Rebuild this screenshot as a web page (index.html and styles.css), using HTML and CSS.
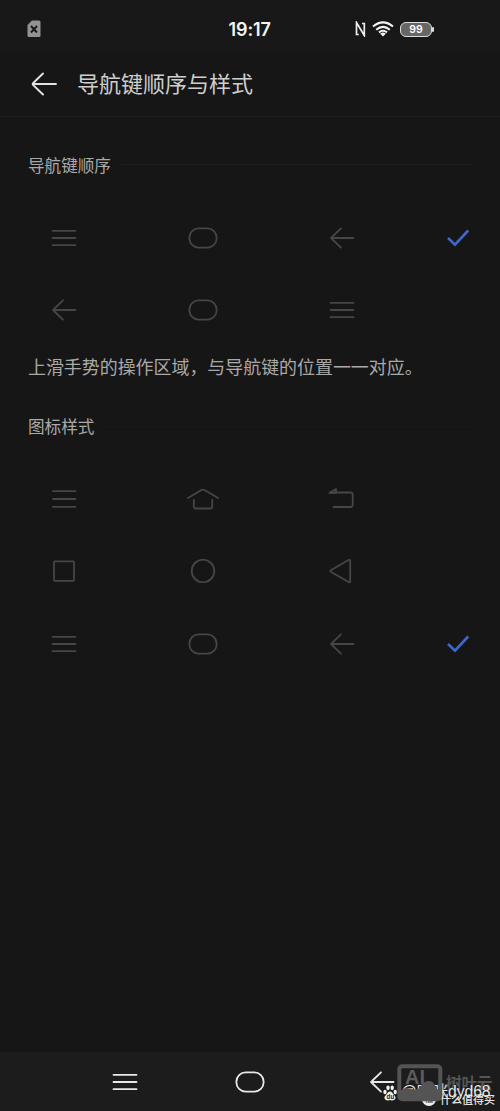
FILE: index.html
```html
<!DOCTYPE html>
<html lang="zh-CN">
<head>
<meta charset="utf-8">
<title>导航键顺序与样式</title>
<link rel="stylesheet" href="styles.css">
</head>
<body>
<svg class="defs" width="0" height="0">
  <symbol id="menu" viewBox="0 0 32 24"><path d="M4.500 4.800h23M4.500 12h23M4.500 19.200h23"/></symbol>
  <symbol id="menu-wide" viewBox="0 0 32 24"><path d="M5 4.200h22.500M5 12h22.500M5 19.900h22.500"/></symbol>
  <symbol id="pill" viewBox="0 0 32 24"><rect x="2.400" y="2.400" width="27.200" height="19.200" rx="9.200"/></symbol>
  <symbol id="back" viewBox="0 0 32 24"><path d="M27.500 12H5M15 2.300L6 11q-1 1 0 2l9 8.700"/></symbol>
  <symbol id="home" viewBox="0 0 32 24"><path d="M1 11L14.500 3q1.500-.8 3 0L31 11M6.800 13v6.500q0 2 2 2h14.400q2 0 2-2V13"/></symbol>
  <symbol id="return" viewBox="0 0 32 24"><path d="M5 5.500h19.500q2.200 0 2.200 2.200v10.100q0 2.200-2.200 2.200H7.500"/><path class="solid" d="M3.500 5.800L10 2v3.800z"/></symbol>
  <symbol id="square" viewBox="0 0 32 24"><rect x="6" y="2.300" width="20" height="19.500" rx="1"/></symbol>
  <symbol id="circle" viewBox="0 0 32 24"><circle cx="16" cy="12" r="11.300"/></symbol>
  <symbol id="triangle" viewBox="0 0 32 24"><path d="M4.800 11.300L22.500 1q1.700-.8 1.700 1v20q0 1.800-1.700 1L4.800 12.700q-1-.7 0-1.400z"/></symbol>
  <symbol id="check" viewBox="0 0 32 24"><path d="M6 12.100l7 6.600L26.200 4.500"/></symbol>
</svg>
<div class="screen">
  <div class="status">
    <svg class="sim" viewBox="0 0 14 18"><path fill="#929292" d="M5 .5h7q1.500 0 1.500 1.500v13.500q0 1.500-1.500 1.500H2q-1.500 0-1.500-1.500V5z"/><path stroke="#181818" stroke-width="1.900" d="M4 6l6 6.500M10 6l-6 6.500"/></svg>
    <span class="time">19:17</span>
    <div class="signals">
      <svg class="nfc" viewBox="0 0 12 16"><path fill="none" stroke="#eee" stroke-width="1.700" d="M4.800 13.500H2.500V1.500L10.300 14.500V2.500H8"/></svg>
      <svg class="wifi" viewBox="0 0 22 16"><g fill="none" stroke="#f4f4f4" stroke-width="2"><path d="M1 5.500Q11-2.800 21 5.500M4.200 8.700Q11 3 17.800 8.700M7 11.400Q11 8.200 15 11.400"/></g><path fill="#f4f4f4" d="M8.200 12.700Q11 10.400 13.800 12.700L11 15.500z"/></svg>
      <div class="battery">99</div>
    </div>
  </div>
  <header class="header">
    <svg class="header-back" viewBox="0 0 28 24"><path d="M26 12H3M13 1.500L3 11.200q-.8.800 0 1.600L13 22.500"/></svg>
    <h1 class="title">导航键顺序与样式</h1>
  </header>
  <main class="content">
    <h2 class="section">导航键顺序</h2>
    <div class="row"><svg class="icon"><use href="#menu"/></svg><svg class="icon"><use href="#pill"/></svg><svg class="icon"><use href="#back"/></svg><svg class="icon check"><use href="#check"/></svg></div>
    <div class="row"><svg class="icon"><use href="#back"/></svg><svg class="icon"><use href="#pill"/></svg><svg class="icon"><use href="#menu"/></svg></div>
    <p class="note">上滑手势的操作区域，与导航键的位置一一对应。</p>
    <h2 class="section faint">图标样式</h2>
    <div class="row"><svg class="icon"><use href="#menu-wide"/></svg><svg class="icon"><use href="#home"/></svg><svg class="icon"><use href="#return"/></svg></div>
    <div class="row"><svg class="icon"><use href="#square"/></svg><svg class="icon"><use href="#circle"/></svg><svg class="icon"><use href="#triangle"/></svg></div>
    <div class="row"><svg class="icon"><use href="#menu"/></svg><svg class="icon"><use href="#pill"/></svg><svg class="icon"><use href="#back"/></svg><svg class="icon check"><use href="#check"/></svg></div>
  </main>
  <nav class="nav">
    <svg class="icon"><use href="#menu"/></svg>
    <svg class="icon"><use href="#pill"/></svg>
    <svg class="icon"><use href="#back"/></svg>
  </nav>
  <div class="marks">
    <svg class="paw" viewBox="0 0 14 16"><g fill="#f2f2f2"><ellipse cx="2" cy="7" rx="1.700" ry="2.300"/><ellipse cx="5" cy="2.800" rx="1.700" ry="2.400"/><ellipse cx="9.200" cy="2.800" rx="1.700" ry="2.400"/><ellipse cx="12.200" cy="7" rx="1.600" ry="2.300"/><path d="M7 6.500c2 0 2.500 2 4 3.400 4 3.600-.5 6.600-4 5.100-3.500 1.500-8-1.500-4-5.100C4.500 8.500 5 6.500 7 6.500z"/></g><text class="paw-text" x="3.600" y="13.800">du</text></svg>
    <span class="badge">值</span>
    <span class="site">什么值得买</span>
    <span class="leaf">树叶云</span>
    <span class="user">@哆咪dyd68</span>
    <svg class="picture" viewBox="0 0 46 38"><rect x="2.300" y="2.300" width="41" height="33" rx="3" fill="none" stroke="#545454" stroke-width="4"/><path fill="#545454" d="M3 36V28q4-6 11-3 4 2 9-1c2-4 4-7 9-7 5 0 6 5 7 7l5 4v8z"/></svg>
    <span class="ai">AI</span>
  </div>
</div>
</body>
</html>
```
FILE: styles.css
```css
body {
  margin: 0;
  background: #171717;
  font-family: "Noto Sans CJK SC", sans-serif;
}
.defs { position: absolute; }
.screen {
  position: relative;
  display: flex;
  flex-direction: column;
  width: 500px;
  height: 1111px;
  overflow: hidden;
  background: #161616;
}
.status {
  display: grid;
  grid-template-columns: 1fr 44px 1fr;
  align-items: center;
  height: 52px;
  padding: 6px 68px 0 27px;
  box-sizing: border-box;
  background: #181818;
}
.sim { width: 14px; height: 18px; }
.time {
  margin-left: 21px;
  padding-top: 2px;
  color: #f4f4f4;
  font: 600 18px/20px Inter, sans-serif;
  white-space: nowrap;
  letter-spacing: -.1px;
}
.signals { display: flex; justify-content: flex-end; align-items: center; }
.nfc { width: 12px; height: 16px; margin-right: 6px; }
.wifi { width: 22px; height: 16px; margin-right: 6px; }
.battery {
  position: relative;
  box-sizing: border-box;
  width: 32px;
  height: 15px;
  border: 1.500px solid #ddd;
  border-radius: 6px;
  background: #666;
  color: #fff;
  font: 600 10.500px/13.500px Inter, sans-serif;
  text-align: center;
}
.battery::after {
  content: "";
  position: absolute;
  right: -3px;
  top: 4px;
  width: 2px;
  height: 5px;
  border-radius: 1px;
  background: #ddd;
}
.header {
  display: flex;
  align-items: center;
  height: 65px;
  padding-left: 30px;
  box-sizing: border-box;
  border-bottom: 1px solid #202020;
}
.header-back {
  width: 28px;
  height: 24px;
  margin-right: 19px;
  fill: none;
  stroke: #e2e2e2;
  stroke-width: 1.900;
  stroke-linecap: round;
}
.title {
  margin: 0;
  padding-bottom: 4px;
  color: #cecece;
  font-size: 22px;
  line-height: 32px;
  font-weight: 400;
}
.content { flex: 1; padding: 35.500px 28px 0; }
.section {
  display: flex;
  align-items: center;
  gap: 10px;
  height: 24px;
  margin: 0 0 25px;
  color: #a9a9a9;
  font-size: 16.600px;
  line-height: 24px;
  font-weight: 400;
}
.section::after { content: ""; flex: 1; height: 1px; background: #1e1e1e; }
.section.faint::after { background: #191919; }
.row {
  display: grid;
  grid-template-columns: repeat(3, 72px) 26px;
  column-gap: 67px;
  align-items: center;
  justify-items: center;
  height: 72.200px;
  margin-right: -28px;
}
.icon {
  width: 32px;
  height: 24px;
  overflow: visible;
  fill: none;
  stroke: #464646;
  stroke-width: 1.800;
  stroke-linecap: round;
  stroke-linejoin: round;
}
.icon .solid { fill: #464646; stroke: none; }
.check {
  stroke: #3c66d2;
  stroke-width: 2.700;
  stroke-linecap: butt;
  stroke-linejoin: miter;
}
.note {
  margin: 7px 0 34.300px;
  color: #a9a9a9;
  font-size: 17.950px;
  line-height: 27px;
  white-space: nowrap;
}
.nav {
  display: flex;
  align-items: center;
  gap: 93px;
  height: 59px;
  padding-left: 109px;
  background: #1c1c1c;
}
.nav .icon { stroke: #e8e8e8; }
.nav .icon:last-child { margin-left: 7px; }
.marks { position: absolute; right: 0; bottom: 0; width: 120px; height: 50px; }
.marks > * { position: absolute; white-space: nowrap; }
.paw { left: 3px; top: 24px; width: 14px; height: 16px; }
.paw-text { fill: #222; font: 700 6px Inter, sans-serif; }
.user { left: 21px; top: 20px; color: #e8e8e8; font: 15.600px/22px "Liberation Sans", "Noto Sans CJK SC", sans-serif; }
.badge { left: 42px; top: 31px; width: 14px; height: 14px; border-radius: 50%; background: #eee; color: #333; font-size: 9px; line-height: 14px; text-align: center; }
.site { left: 60px; top: 29px; color: #e5e5e5; font-size: 11px; line-height: 18px; font-weight: 500; }
.picture { left: 17px; top: 3px; width: 46px; height: 38px; }
.ai { left: 25px; top: 6px; color: #5b5b5b; font: 700 20px/20px "Liberation Sans", sans-serif; }
.leaf { left: 66px; top: 10px; color: #555; font-size: 15.500px; line-height: 22px; font-weight: 700; }
```
